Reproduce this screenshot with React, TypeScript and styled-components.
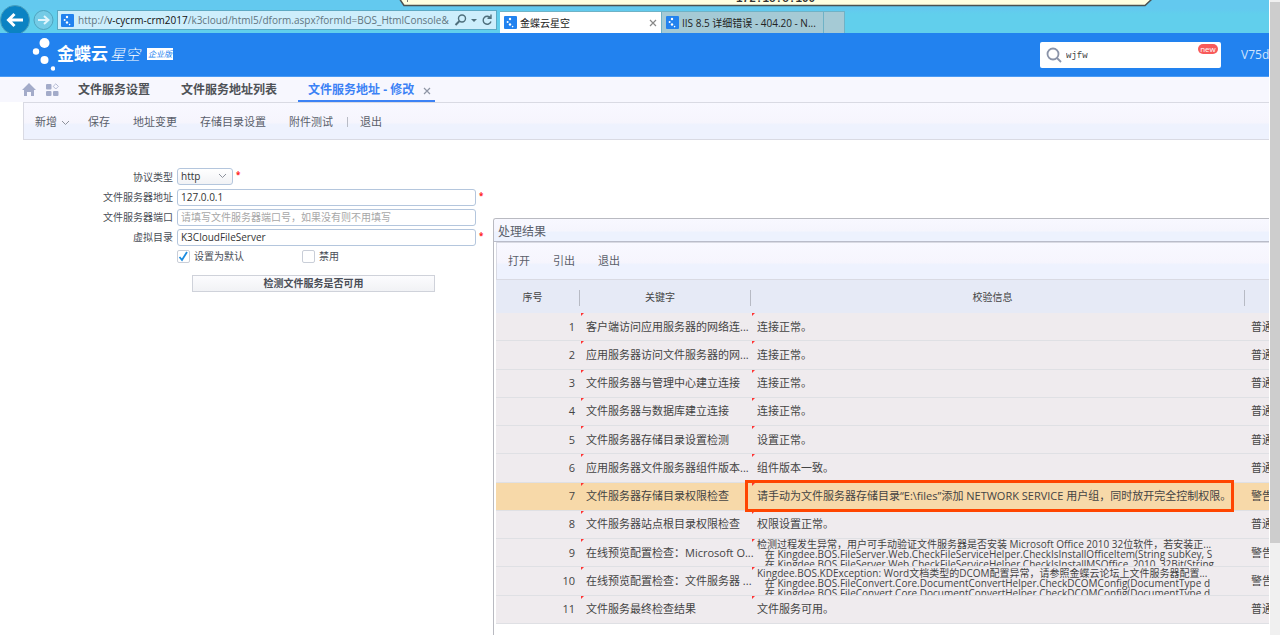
import React from "react";
import styled, { createGlobalStyle, css } from "styled-components";

const Global = createGlobalStyle`
  *, *::before, *::after { box-sizing: border-box; }
  html, body, #root { height: 100%; }
  body { margin: 0; background: #fff; overflow: hidden; }
  body, button, input, select { font-family: "Open Sans", "Noto Sans CJK SC", sans-serif; color: #4a4e57; }
  button { cursor: pointer; }
`;

const Shell = styled.div`
  display: grid;
  grid-template-columns: minmax(0, 1fr) 11px;
  height: 100vh;
  overflow: hidden;
`;
const Desktop = styled.div`
  display: flex;
  flex-direction: column;
  overflow: hidden;
`;
const Track = styled.div`
  background: #f0f0f0;
  border-left: 1px solid #fff;
  padding-top: 2px;
`;
const Thumb = styled.div`
  height: 85.5%;
  background: #cdcdcd;
`;

const Browser = styled.div`
  position: relative;
  display: flex;
  align-items: flex-end;
  height: 33px;
  background: linear-gradient(#63c9ef 0, #63c9ef 9px, #61cfec 14px);
`;
const SessionBar = styled.div`
  position: absolute;
  top: 0;
  left: 399px;
  width: 753px;
  height: 7px;
  overflow: hidden;
  svg { display: block; }
`;
const SessionName = styled.span`
  position: absolute;
  left: 337px;
  bottom: 2px;
  font: bold 11px/12px "Liberation Mono", monospace;
  color: #333;
`;
const NavIcons = styled.div`
  width: 57px;
  height: 28px;
`;
const Address = styled.div`
  display: flex;
  align-items: center;
  width: 440px;
  height: 20px;
  margin-bottom: 3px;
  padding: 0 2px 0 3px;
  background: #cdeefc;
  border: 1px solid #5ba9c4;
`;
const Url = styled.div`
  flex: 1;
  margin-left: 4px;
  overflow: hidden;
  white-space: nowrap;
  font-size: 10px;
  line-height: 16px;
  color: #61757f;
  b { font-weight: 400; color: #111; }
`;
const BrowserTab = styled.button<{ $active?: boolean; $width: number }>`
  display: flex;
  align-items: center;
  gap: 3px;
  width: ${(p) => p.$width}px;
  height: 22px;
  margin: 0;
  padding: 0 4px;
  border: 1px solid #6fb2c6;
  border-width: 1px 1px 0 0;
  background: ${(p) => (p.$active ? "#fff" : "#a5cad5")};
  font-size: 10px;
  line-height: 20px;
  color: #222;
  text-align: left;
  white-space: nowrap;
  span { flex: 1; }
`;
const BrowserTabs = styled.div`
  display: flex;
  margin-left: 3px;
`;

const Banner = styled.header`
  display: flex;
  align-items: center;
  height: 44px;
  padding-left: 32px;
  background: #2282ef;
  border-bottom: 1px solid #4b9bf5;
  color: #fff;
  overflow: hidden;
`;
const Brand = styled.div`
  display: flex;
  align-items: center;
  flex: 1;
  padding-bottom: 2px;
  white-space: nowrap;
`;
const BrandName = styled.span`
  margin-left: 2px;
  font-size: 17px;
  line-height: 24px;
  font-weight: 700;
`;
const BrandSub = styled.em`
  margin-left: 2px;
  font-size: 15px;
  line-height: 24px;
  font-weight: 300;
`;
const Edition = styled.span`
  margin-left: 7px;
  padding: 0 1px;
  background: #fff;
  color: #2282ef;
  font-size: 8px;
  line-height: 12px;
  font-style: italic;
`;
const Search = styled.label`
  position: relative;
  display: flex;
  align-items: center;
  width: 181px;
  height: 26px;
  padding-left: 6px;
  background: #fff;
  border-radius: 2px;
  input {
    flex: 1;
    min-width: 0;
    margin-left: 4px;
    padding: 2px 0 0;
    border: 0;
    outline: 0;
    font: 9px/16px "Liberation Mono", monospace;
    color: #444;
  }
`;
const NewBadge = styled.span`
  position: absolute;
  top: 2px;
  right: 3px;
  width: 20px;
  border-radius: 5px;
  background: #f85a5a;
  color: #fff;
  font-size: 8px;
  line-height: 10px;
  text-align: center;
`;
const Version = styled.div`
  width: 28px;
  margin-left: 20px;
  overflow: hidden;
  white-space: nowrap;
  font-size: 12px;
  line-height: 18px;
  color: #cfe4fd;
`;

const PageTabs = styled.nav`
  display: flex;
  align-items: stretch;
  height: 25px;
  padding-left: 22px;
  background: #f7f7fe;
`;
const IconButton = styled.button`
  display: flex;
  align-items: center;
  width: 23px;
  padding: 0;
  border: 0;
  background: none;
`;
const PageTab = styled.button<{ $active?: boolean }>`
  display: flex;
  align-items: center;
  margin: 0 11px 0 0;
  padding: 2px 10px 0;
  border: 0;
  border-bottom: 2px solid ${(p) => (p.$active ? "#3c82f5" : "transparent")};
  background: none;
  font-size: 12px;
  line-height: 20px;
  font-weight: 700;
  white-space: nowrap;
  color: ${(p) => (p.$active ? "#3c82f5" : "#4f5257")};
  svg { margin: 2px -6px 0 9px; }
`;
const bar = css`
  display: flex;
  align-items: center;
  height: 38px;
  background: linear-gradient(#f8f8ff 0, #f6f5fd 54%, #eef2fe 60%, #eef2fe);
  border: 1px solid #d9dae3;
  border-right: 0;
`;
const MainBar = styled.div`
  ${bar}
  margin-left: 23px;
  padding: 2px 0 0 11px;
`;
const Command = styled.button`
  display: flex;
  align-items: center;
  margin: 0 23px 0 0;
  padding: 0;
  border: 0;
  background: none;
  font-size: 11px;
  line-height: 18px;
  white-space: nowrap;
  color: #5a5f6b;
  svg { margin: 2px -5px 0 4px; }
`;
const Split = styled.i`
  width: 1px;
  height: 10px;
  margin: 0 12px 0 -9px;
  background: #b9bcc6;
`;

const Content = styled.main`
  flex: 1;
  display: flex;
  align-items: flex-start;
  overflow: hidden;
`;
const Form = styled.form`
  flex: none;
  width: 493px;
  padding: 26px 0 0 90px;
`;
const Line = styled.div`
  display: flex;
  align-items: center;
  height: 20px;
  font-size: 10px;
  line-height: 16px;
  &:first-child { height: 21px; }
`;
const Label = styled.label`
  width: 83px;
  margin-right: 4px;
  text-align: right;
`;
const Star = styled.span`
  align-self: flex-start;
  margin-left: 3px;
  color: #f22;
  font-size: 8px;
  line-height: 18px;
  font-weight: 700;
`;
const field = css`
  height: 17px;
  margin: 0;
  border: 1px solid #b4c6dd;
  border-radius: 3px;
  background: #fff;
  font-size: 10px;
  line-height: 15px;
  color: #333;
`;
const TextBox = styled.input`
  ${field}
  width: 299px;
  padding: 0 3px;
  &::placeholder { color: #a7a7a7; opacity: 1; }
`;
const SelectWrap = styled.span`
  position: relative;
  display: flex;
  svg { position: absolute; right: 6px; top: 5px; pointer-events: none; }
`;
const Select = styled.select`
  ${field}
  appearance: none;
  width: 56px;
  padding: 0 3px;
  background: linear-gradient(#fff, #f1f2f5);
`;
const Checks = styled.div`
  display: flex;
  gap: 58px;
  height: 18px;
  padding-left: 87px;
`;
const Check = styled.label`
  display: flex;
  align-items: center;
  gap: 4px;
  font-size: 10px;
  line-height: 16px;
`;
const Box = styled.span`
  position: relative;
  display: flex;
  width: 13px;
  height: 13px;
  input {
    appearance: none;
    width: 13px;
    height: 13px;
    margin: 0;
    border: 1px solid #c9ced8;
    border-radius: 2px;
    background: #fff;
  }
  svg { position: absolute; left: 1px; top: 1px; pointer-events: none; display: none; }
  input:checked + svg { display: block; }
`;
const TestButton = styled.button`
  display: block;
  width: 243px;
  height: 17px;
  margin: 10px 0 0 102px;
  padding: 0;
  border: 1px solid #cfd2da;
  background: linear-gradient(#fcfcfe, #f1f2f5);
  font-size: 10px;
  line-height: 15px;
  font-weight: 700;
`;

const Dialog = styled.section`
  flex: 1;
  min-width: 0;
  align-self: stretch;
  margin-top: 78px;
  overflow: hidden;
  border: 1px solid #b9bac1;
  border-right: 0;
  border-bottom: 0;
  border-radius: 3px 0 0 0;
`;
const Title = styled.h2`
  margin: 0;
  height: 23px;
  padding-left: 4px;
  background: linear-gradient(#f8f8ff 0, #f5f5fd 54%, #edf2fe 60%, #edf2fe);
  border-bottom: 1px solid #b9bcc9;
  font-size: 12px;
  line-height: 26px;
  font-weight: 400;
  color: #5a5f6b;
`;
const DialogBar = styled.div`
  ${bar}
  margin: 0 0 0 2px;
  padding: 0 0 0 11px;
`;
const Grid = styled.table`
  width: calc(100% - 2px);
  height: 344px;
  margin-left: 2px;
  border-collapse: separate;
  border-spacing: 0;
  table-layout: fixed;
  font-size: 11px;
  line-height: 16px;
  color: #444;
`;
const Head = styled.th`
  position: relative;
  height: 33px;
  padding: 0 11px 0 0;
  background: #e6eaf6;
  font-size: 10px;
  font-weight: 400;
  &:not(:last-child)::after {
    content: "";
    position: absolute;
    right: 0;
    top: 10px;
    width: 1px;
    height: 16px;
    background: #b7bac4;
  }
`;
const Cell = styled.td<{ $num?: boolean; $flag?: boolean }>`
  position: relative;
  height: 28px;
  padding: 0 0 0 6px;
  border-bottom: 1px solid #dfe0e4;
  white-space: nowrap;
  ${(p) => p.$num && css`padding: 0 5px 0 0; text-align: right;`}
  ${(p) =>
    p.$flag &&
    css`
      &::before {
        content: "";
        position: absolute;
        left: 1px;
        top: 0;
        border-top: 3px solid #f33;
        border-right: 3px solid transparent;
      }
    `}
`;
const Row = styled.tr<{ $warn?: boolean }>`
  background: ${(p) => (p.$warn ? "#f7d9a9" : "#efebee")};
`;
const Trace = styled.div`
  height: 27px;
  overflow: hidden;
  white-space: pre;
  font-size: 10px;
  line-height: 10px;
`;
const Callout = styled.span`
  position: absolute;
  inset: -3px 11px -2px -6px;
  border: 3px solid #ff4500;
  z-index: 1;
`;

const Favicon = () => (
  <svg width="13" height="13" viewBox="0 0 13 13">
    <rect width="13" height="13" rx="1" fill="#2282ef" />
    <g fill="#fff">
      <circle cx="6" cy="3" r="1.2" /><circle cx="3.6" cy="6" r="1" />
      <circle cx="6" cy="8.5" r="1.2" /><circle cx="8.6" cy="10.6" r=".8" />
    </g>
  </svg>
);
const Chevron = () => (
  <svg width="9" height="6" viewBox="0 0 9 6" fill="none" stroke="#8d929c">
    <path d="M1 1l3.5 3.5L8 1" />
  </svg>
);
const Cross = ({ color }: { color: string }) => (
  <svg width="8" height="8" viewBox="0 0 8 8" stroke={color} strokeWidth="1.2">
    <path d="M1 1l6 6M7 1L1 7" />
  </svg>
);

type Item = { key: string; info: string; level: string; warn?: boolean; trace?: boolean };
const rows: Item[] = [
  { key: "客户端访问应用服务器的网络连...", info: "连接正常。", level: "普通" },
  { key: "应用服务器访问文件服务器的网...", info: "连接正常。", level: "普通" },
  { key: "文件服务器与管理中心建立连接", info: "连接正常。", level: "普通" },
  { key: "文件服务器与数据库建立连接", info: "连接正常。", level: "普通" },
  { key: "文件服务器存储目录设置检测", info: "设置正常。", level: "普通" },
  { key: "应用服务器文件服务器组件版本...", info: "组件版本一致。", level: "普通" },
  { key: "文件服务器存储目录权限检查", info: "请手动为文件服务器存储目录“E:\\files”添加 NETWORK SERVICE 用户组，同时放开完全控制权限。", level: "警告", warn: true },
  { key: "文件服务器站点根目录权限检查", info: "权限设置正常。", level: "普通" },
  {
    key: "在线预览配置检查：Microsoft O...", level: "警告", trace: true,
    info: "检测过程发生异常，用户可手动验证文件服务器是否安装 Microsoft Office 2010 32位软件，若安装正...\n   在 Kingdee.BOS.FileServer.Web.CheckFileServiceHelper.CheckIsInstallOfficeItem(String subKey, S\n   在 Kingdee.BOS.FileServer.Web.CheckFileServiceHelper.CheckIsInstallMSOffice_2010_32Bit(String",
  },
  {
    key: "在线预览配置检查：文件服务器 ...", level: "警告", trace: true,
    info: "Kingdee.BOS.KDException: Word文档类型的DCOM配置异常，请参照金蝶云论坛上文件服务器配置...\n   在 Kingdee.BOS.FileConvert.Core.DocumentConvertHelper.CheckDCOMConfig(DocumentType d\n   在 Kingdee.BOS.FileConvert.Core.DocumentConvertHelper.CheckDCOMConfig(DocumentType d",
  },
  { key: "文件服务最终检查结果", info: "文件服务可用。", level: "普通" },
];

export default function App() {
  return (
    <>
      <Global />
      <Shell>
        <Desktop>
          <Browser>
            <NavIcons>
              <svg width="56" height="28" viewBox="0 5 56 28" fill="none">
                <circle cx="15" cy="20" r="14.500" fill="#0b83c3" stroke="#4a9fbd" />
                <path d="M23 20H9M14.500 14L8.500 20l6 6" stroke="#fff" strokeWidth="3" />
                <circle cx="43.500" cy="20" r="9.500" fill="#74cbe6" stroke="#4fa4bf" />
                <path d="M38 20h10M44 16l4.500 4-4.500 4" stroke="#dff5fc" strokeWidth="2" />
              </svg>
            </NavIcons>
            <Address>
              <Favicon />
              <Url>http://<b>v-cycrm-crm2017</b>/k3cloud/html5/dform.aspx?formId=BOS_HtmlConsole&amp;</Url>
              <svg width="42" height="14" viewBox="0 0 42 14" fill="none" stroke="#4f6f7c" strokeWidth="1.4">
                <circle cx="10" cy="5.500" r="3.500" /><path d="M7.500 8L3.500 12" strokeWidth="2" />
                <path d="M19 6h6l-3 3z" fill="#4f6f7c" stroke="none" />
                <path d="M38.500 5A4 4 0 1 0 39 8.500M39 1.500V5.200H35.500" />
              </svg>
            </Address>
            <BrowserTabs>
              <BrowserTab $active $width={162}><Favicon /><span>金蝶云星空</span><Cross color="#888" /></BrowserTab>
              <BrowserTab $width={162}><Favicon /><span>IIS 8.5 详细错误 - 404.20 - N...</span></BrowserTab>
              <BrowserTab $width={21} aria-label="新建选项卡" />
            </BrowserTabs>
            <SessionBar>
              <svg width="753" height="7" viewBox="0 0 753 7">
                <path d="M0 -2L5 5.500H746L753 -1" fill="#ffffe1" stroke="#4a5252" strokeWidth="1.5" />
                <path d="M8.500 0v2" stroke="#777" />
              </svg>
              <SessionName>172.18.8.190</SessionName>
            </SessionBar>
          </Browser>

          <Banner>
            <Brand>
              <svg width="23" height="34" viewBox="0 0 23 34" fill="#fff">
                <circle cx="12.500" cy="6" r="5" /><circle cx="4" cy="14.500" r="3.200" />
                <circle cx="12.500" cy="23" r="4" /><circle cx="21" cy="31.500" r="2.200" />
              </svg>
              <BrandName>金蝶云</BrandName>
              <BrandSub>星空</BrandSub>
              <Edition>企业版</Edition>
            </Brand>
            <Search>
              <svg width="16" height="16" viewBox="0 0 16 16" fill="none" stroke="#8a93a8" strokeWidth="1.8">
                <circle cx="7" cy="7" r="5.500" /><path d="M11 11l4 4" />
              </svg>
              <input aria-label="搜索" defaultValue="wjfw" />
              <NewBadge>new</NewBadge>
            </Search>
            <Version>V75d</Version>
          </Banner>

          <PageTabs>
            <IconButton aria-label="首页">
              <svg width="14" height="14" viewBox="0 0 14 14" fill="#a3abc9">
                <path d="M7 0l7 7h-2v6H9V9H5v4H2V7H0L7 0z" />
              </svg>
            </IconButton>
            <IconButton aria-label="应用">
              <svg width="14" height="14" viewBox="0 0 14 14" fill="#a3abc9">
                <rect x="1" y="1" width="5.500" height="5.500" rx="1" /><rect x="1" y="8" width="5.500" height="5" rx="1" />
                <rect x="8" y="8" width="5.500" height="5" rx="1" />
                <path d="M10.800 .8l2.600 2.600-2.600 2.600-2.600-2.600z" fill="none" stroke="#a3abc9" strokeWidth=".8" />
              </svg>
            </IconButton>
            <PageTab>文件服务设置</PageTab>
            <PageTab>文件服务地址列表</PageTab>
            <PageTab $active>文件服务地址 - 修改<Cross color="#8f96a5" /></PageTab>
          </PageTabs>
          <MainBar>
            <Command>新增<Chevron /></Command>
            <Command>保存</Command>
            <Command>地址变更</Command>
            <Command>存储目录设置</Command>
            <Command>附件测试</Command>
            <Split />
            <Command>退出</Command>
          </MainBar>

          <Content>
            <Form onSubmit={(e) => e.preventDefault()}>
              <Line>
                <Label htmlFor="protocol">协议类型</Label>
                <SelectWrap>
                  <Select id="protocol"><option>http</option></Select>
                  <Chevron />
                </SelectWrap>
                <Star>*</Star>
              </Line>
              <Line>
                <Label htmlFor="host">文件服务器地址</Label>
                <TextBox id="host" defaultValue="127.0.0.1" />
                <Star>*</Star>
              </Line>
              <Line>
                <Label htmlFor="port">文件服务器端口</Label>
                <TextBox id="port" placeholder="请填写文件服务器端口号，如果没有则不用填写" />
              </Line>
              <Line>
                <Label htmlFor="dir">虚拟目录</Label>
                <TextBox id="dir" defaultValue="K3CloudFileServer" />
                <Star>*</Star>
              </Line>
              <Checks>
                {[["设置为默认", true], ["禁用", false]].map(([text, on]) => (
                  <Check key={String(text)}>
                    <Box>
                      <input type="checkbox" defaultChecked={Boolean(on)} />
                      <svg width="11" height="11" viewBox="0 0 11 11" fill="none" stroke="#1a8be0" strokeWidth="1.8">
                        <path d="M1.500 6L4 9l5-8" />
                      </svg>
                    </Box>
                    {text}
                  </Check>
                ))}
              </Checks>
              <TestButton type="button">检测文件服务是否可用</TestButton>
            </Form>

            <Dialog>
              <Title>处理结果</Title>
              <DialogBar>
                <Command>打开</Command>
                <Command>引出</Command>
                <Command>退出</Command>
              </DialogBar>
              <Grid>
                <colgroup>
                  <col width="84" />
                  <col width="171" />
                  <col />
                  <col width="24" />
                </colgroup>
                <thead>
                  <tr><Head>序号</Head><Head>关键字</Head><Head>校验信息</Head><Head /></tr>
                </thead>
                <tbody>
                  {rows.map((r, i) => (
                    <Row key={r.key} $warn={r.warn}>
                      <Cell $num>{i + 1}</Cell>
                      <Cell $flag>{r.key}</Cell>
                      <Cell $flag>
                        {r.trace ? <Trace>{r.info}</Trace> : r.info}
                        {r.warn && <Callout />}
                      </Cell>
                      <Cell>{r.level}</Cell>
                    </Row>
                  ))}
                </tbody>
              </Grid>
            </Dialog>
          </Content>
        </Desktop>
        <Track><Thumb /></Track>
      </Shell>
    </>
  );
}
